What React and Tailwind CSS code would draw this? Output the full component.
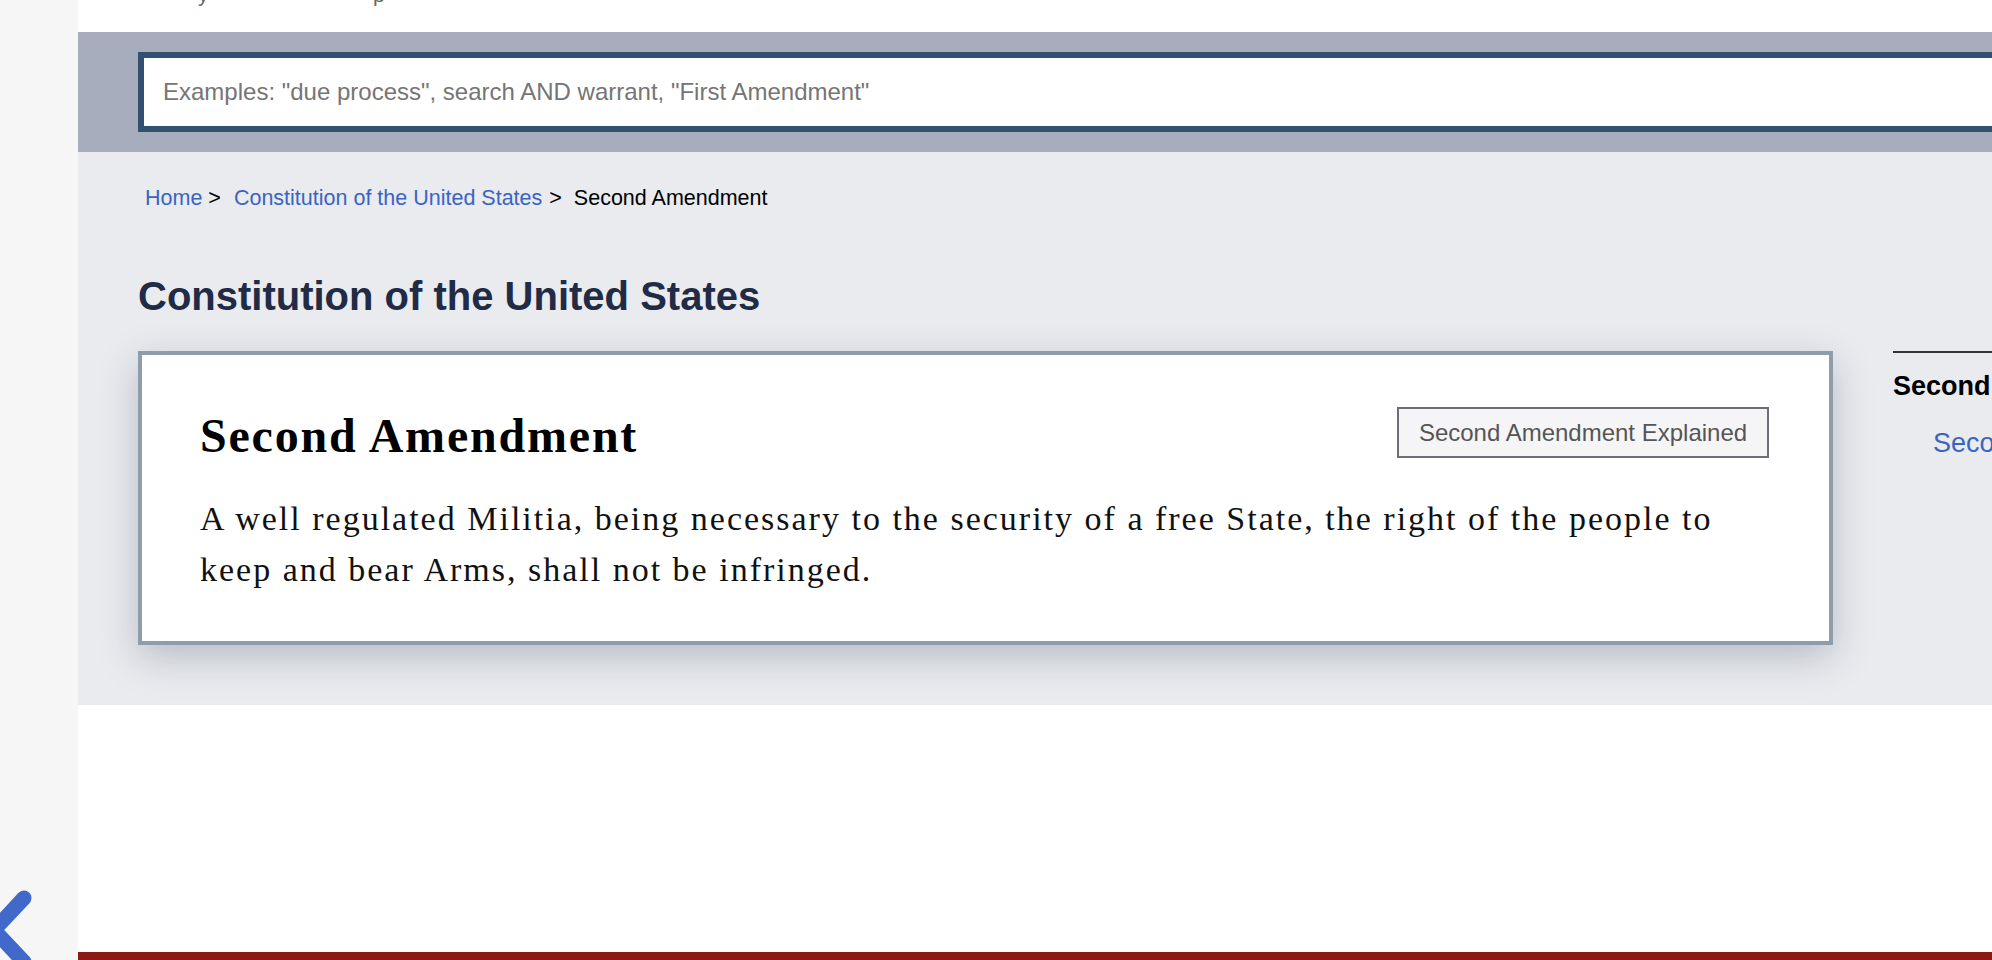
import React from "react";

function Chevron() {
  return (
    <svg width="78" height="100" viewBox="0 0 78 100" className="absolute left-0 top-[860px]">
      <polyline
        points="24,38 -6,70 24,102"
        fill="none"
        stroke="#4169c9"
        strokeWidth="15"
        strokeLinecap="round"
        strokeLinejoin="round"
      />
    </svg>
  );
}

export default function App() {
  return (
    <div className="flex h-[960px] w-full overflow-hidden bg-white font-['Liberation_Sans',Arial,sans-serif]">
      {/* left rail */}
      <div className="relative w-[78px] shrink-0 bg-[#f6f6f6]">
        <Chevron />
      </div>

      {/* main */}
      <div className="flex min-w-0 flex-1 flex-col">
        {/* clipped top text */}
        <div className="h-[32px] overflow-hidden">
          <div className="-mt-[17px] flex pl-[120px] text-[21px] leading-[24px] text-[#666]">
            <span className="w-[175px]">y</span>
            <span>p</span>
          </div>
        </div>

        {/* search band */}
        <div className="h-[120px] shrink-0 bg-[#a8adbd] pl-[60px] pt-[20px]">
          <div className="flex h-[80px] w-[1900px] items-center border-[6px] border-[#32506f] bg-white pl-[19px]">
            <span className="text-[24px] text-[#757575]">
              Examples: "due process", search AND warrant, "First Amendment"
            </span>
          </div>
        </div>

        {/* content */}
        <div className="shrink-0 bg-[#e9ebef] pb-[60px] pl-[60px] pt-[34px]">
          <nav className="flex pl-[7px] text-[21.5px] leading-[24px]">
            <a className="text-[#3a64c3]">Home</a>
            <span className="ml-[6px] mr-[13px] text-black">&gt;</span>
            <a className="text-[#3a64c3]">Constitution of the United States</a>
            <span className="ml-[7px] mr-[12px] text-black">&gt;</span>
            <span className="text-black">Second Amendment</span>
          </nav>

          <h1 className="mt-[66px] text-[40px] font-bold leading-[40px] text-[#212b45]">
            Constitution of the United States
          </h1>

          <div className="mt-[35px] flex gap-[60px]">
            <div className="w-[1695px] shrink-0 border-[4px] border-[#8e9dab] bg-white pb-[46px] pl-[58px] pr-[60px] pt-[52px] shadow-[0_12px_36px_rgba(40,50,70,0.25)]">
              <div className="flex items-start justify-between">
                <h2 className="font-['Liberation_Serif',serif] text-[48px] font-bold leading-[57.6px] tracking-[1.8px] text-black">
                  Second Amendment
                </h2>
                <button className="h-[51px] w-[372px] border-2 border-[#6c6f75] bg-[#f5f5f7] text-[24px] text-[#555]">
                  Second Amendment Explained
                </button>
              </div>
              <p className="mt-[28px] font-['Liberation_Serif',serif] text-[34px] leading-[51px] tracking-[2px] text-[#111]">
                A well regulated Militia, being necessary to the security of a free State, the right of the people to keep and bear Arms, shall not be infringed.
              </p>
            </div>

            <aside className="w-[300px] shrink-0 border-t-2 border-[#333] pt-[17px]">
              <div className="text-[27px] font-bold leading-[32px] text-black">Second Amendment</div>
              <div className="mt-[25px] pl-[40px] text-[27px] leading-[32px] text-[#3a64c3]">
                Second Amendment
              </div>
            </aside>
          </div>
        </div>

        {/* white area */}
        <div className="flex-1" />

        {/* red footer bar */}
        <div className="h-[8px] shrink-0 bg-[#8b1a13]" />
      </div>
    </div>
  );
}
